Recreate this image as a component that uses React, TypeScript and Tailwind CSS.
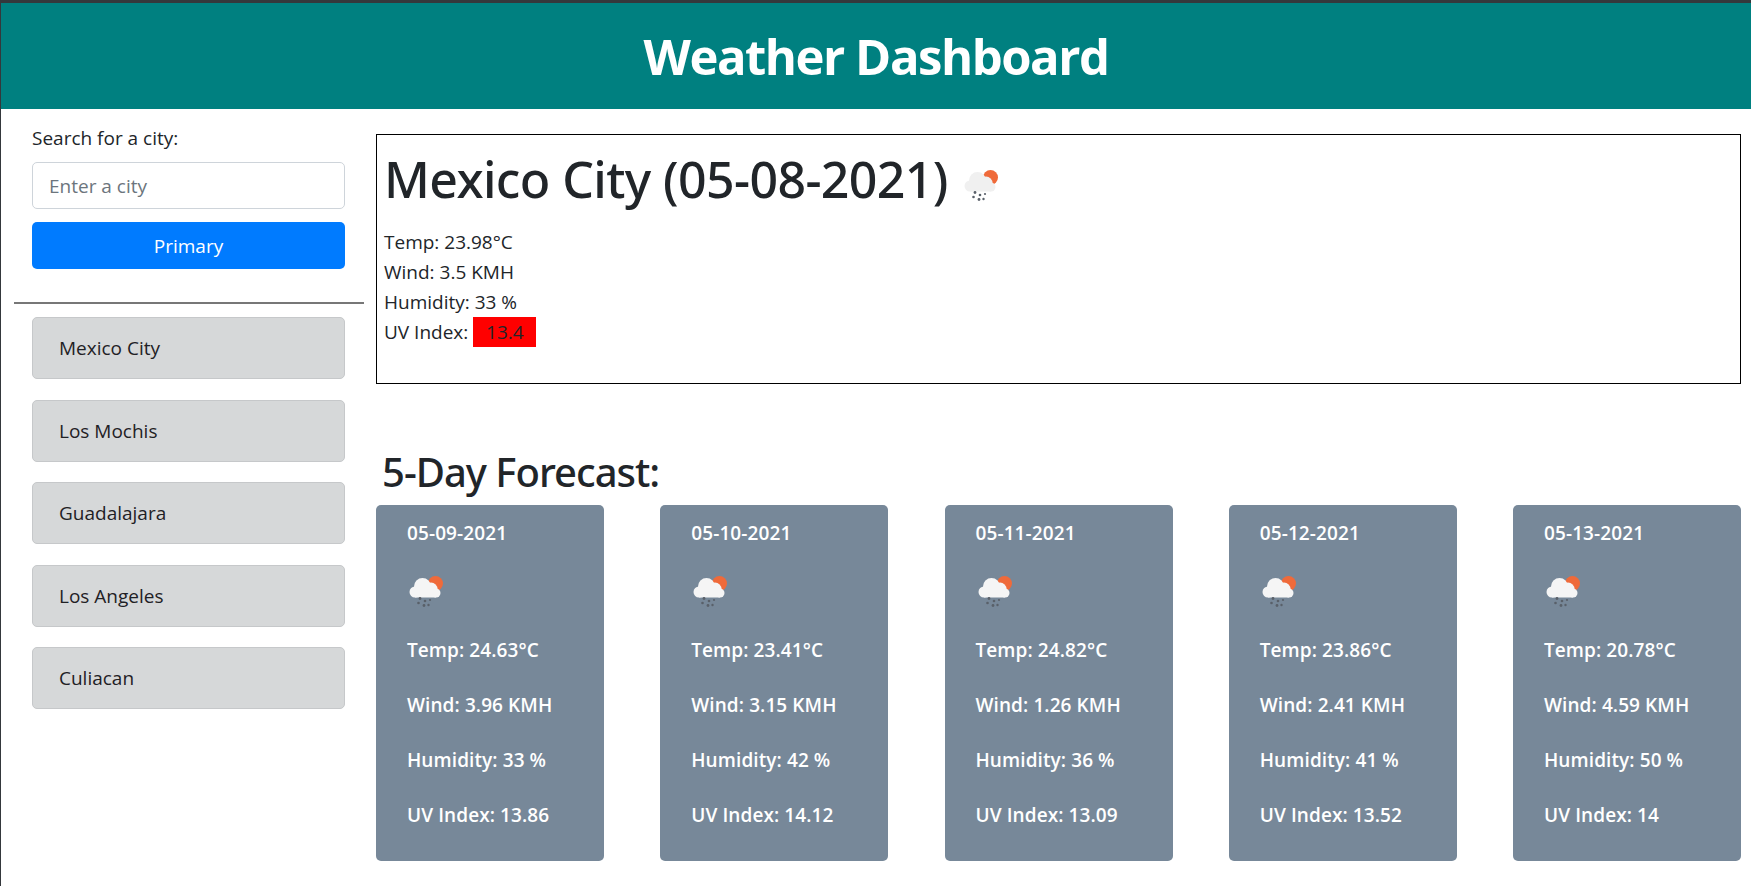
import React from 'react';

const cities = ['Mexico City', 'Los Mochis', 'Guadalajara', 'Los Angeles', 'Culiacan'];

const forecast = [
  { date: '05-09-2021', temp: '24.63', wind: '3.96', humidity: '33', uv: '13.86' },
  { date: '05-10-2021', temp: '23.41', wind: '3.15', humidity: '42', uv: '14.12' },
  { date: '05-11-2021', temp: '24.82', wind: '1.26', humidity: '36', uv: '13.09' },
  { date: '05-12-2021', temp: '23.86', wind: '2.41', humidity: '41', uv: '13.52' },
  { date: '05-13-2021', temp: '20.78', wind: '4.59', humidity: '50', uv: '14' },
];

// sun behind a rain cloud, same 50x50 tile on white and on the cards
const RainIcon: React.FC<{ cloud?: string; className?: string }> = ({ cloud = '#f5f5f5', className }) => (
  <svg viewBox="0 0 50 50" className={className}>
    <circle cx="34.5" cy="17.5" r="7.5" fill="#ef6a3a" />
    <g fill={cloud}>
      <circle cx="14" cy="26" r="5.5" />
      <circle cx="21.5" cy="20.5" r="8.5" />
      <circle cx="30" cy="23" r="6.5" />
      <circle cx="35" cy="27" r="4.5" />
      <rect x="14" y="24" width="21" height="7.5" />
    </g>
    <g fill="#596069">
      <circle cx="19" cy="32.5" r="1.4" />
      <circle cx="24" cy="35" r="1.3" />
      <circle cx="29" cy="34" r="1.1" />
      <circle cx="17.5" cy="37" r="1.3" />
      <circle cx="23" cy="39.5" r="1.4" />
      <circle cx="27.5" cy="39" r="1.2" />
    </g>
  </svg>
);

const ForecastCard: React.FC<{ day: (typeof forecast)[number] }> = ({ day }) => (
  <div className="w-[228px] h-[356px] rounded-[5px] bg-[#778899] pl-[31px] pt-[13px] text-[19px] leading-[30px] font-semibold text-white tracking-[0.005em]">
    <p>{day.date}</p>
    <RainIcon className="mt-[18px] -ml-[6px] w-[50px] h-[50px]" />
    <div className="mt-[19px] flex flex-col gap-[25px]">
      <p>Temp: {day.temp}°C</p>
      <p>Wind: {day.wind} KMH</p>
      <p>Humidity: {day.humidity} %</p>
      <p>UV Index: {day.uv}</p>
    </div>
  </div>
);

export default function App() {
  return (
    <div className="min-h-screen border-l border-t-[3px] border-[#34383c] bg-white text-[#212529] font-['Open_Sans',sans-serif] text-[19px] leading-[30px]">
      <header className="h-[106px] flex items-center justify-center bg-[#008080]">
        <h1 className="text-[49px] leading-[60px] font-bold text-white tracking-[-0.03em]">Weather Dashboard</h1>
      </header>

      <div className="flex">
        <aside className="w-[375px] shrink-0 pt-[14px] pl-[13px]">
          <div className="px-[18px] w-[349px]">
            <label className="block">Search for a city:</label>
            <input
              placeholder="Enter a city"
              className="mt-[9px] w-full h-[47px] px-[16px] rounded-[5px] border border-[#ced4da] bg-white placeholder:text-[#6c757d] outline-none"
            />
            <button className="mt-[13px] w-full h-[47px] rounded-[5px] bg-[#007bff] text-white">Primary</button>
          </div>
          <hr className="mt-[33px] w-[350px] border-t-2 border-[#777777]" />
          <div className="mt-[13px] px-[18px] w-[349px] flex flex-col gap-[20.5px]">
            {cities.map((city) => (
              <button
                key={city}
                className="h-[62px] pl-[26px] text-left rounded-[5px] border border-[#c6c8ca] bg-[#d6d8d9] text-[#1f2125]"
              >
                {city}
              </button>
            ))}
          </div>
        </aside>

        <main className="flex-1 pt-[25px] pr-[10px]">
          <section className="h-[250px] border border-black px-[7px]">
            <div className="flex pt-[14px] h-[77px]">
              <h2 className="font-['Noto_Sans',sans-serif] text-[50px] leading-[60px] font-medium tracking-[-0.012em]">Mexico City (05-08-2021)</h2>
              <RainIcon cloud="#f0f0f0" className="ml-[8px] mt-[11px] w-[50px] h-[50px]" />
            </div>
            <div className="mt-[15px]">
              <p>Temp: 23.98°C</p>
              <p>Wind: 3.5 KMH</p>
              <p>Humidity: 33 %</p>
              <p className="flex">
                UV Index:
                <span className="ml-[5px] w-[63px] h-[30px] bg-[#ff0000] text-center">13.4</span>
              </p>
            </div>
          </section>

          <h2 className="font-['Noto_Sans',sans-serif] mt-[64px] mb-[9px] ml-[6px] text-[40px] leading-[48px] font-medium tracking-[-0.025em]">5-Day Forecast:</h2>

          <div className="flex justify-between">
            {forecast.map((day) => (
              <ForecastCard key={day.date} day={day} />
            ))}
          </div>
        </main>
      </div>
    </div>
  );
}
